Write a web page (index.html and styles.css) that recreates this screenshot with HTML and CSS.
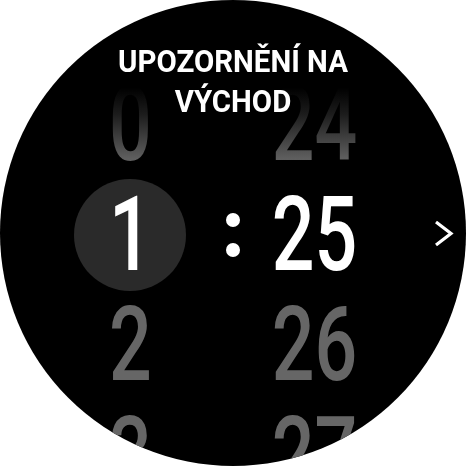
FILE: index.html
```html
<!DOCTYPE html>
<html lang="cs">
<head>
<meta charset="utf-8">
<title>Upozornění na východ</title>
<link rel="stylesheet" href="styles.css">
</head>
<body>
<div class="watch">
  <div class="picker">
    <div class="col hours">
      <div class="cell"><span class="num fade">0</span></div>
      <div class="cell sel"><span class="num">1</span></div>
      <div class="cell"><span class="num dim">2</span></div>
      <div class="cell"><span class="num dim">3</span></div>
    </div>
    <div class="col sep">
      <div class="cell"></div>
      <div class="cell colon"><i class="dot"></i><i class="dot"></i></div>
    </div>
    <div class="col mins">
      <div class="cell"><span class="num fade">24</span></div>
      <div class="cell"><span class="num">25</span></div>
      <div class="cell"><span class="num dim">26</span></div>
      <div class="cell"><span class="num dim">27</span></div>
    </div>
  </div>
  <h1 class="title">UPOZORNĚNÍ NA<br>VÝCHOD</h1>
  <svg class="chev" width="20" height="28" viewBox="0 0 20 28"><polyline points="2,2 17,13.5 2,25" fill="none" stroke="#fff" stroke-width="3.2" stroke-linejoin="miter" stroke-linecap="butt"/></svg>
</div>
</body>
</html>
```
FILE: styles.css
```css
html, body {
  margin: 0;
  padding: 0;
  background: #fff;
}
.watch {
  position: relative;
  width: 466px;
  height: 466px;
  border-radius: 50%;
  background: #000;
  overflow: hidden;
  font-family: Roboto, "Liberation Sans", sans-serif;
  color: #fff;
}
.picker {
  display: grid;
  grid-template-columns: 114px 92px 72px;
  margin-left: 73px;
  padding-top: 70px;
}
.col {
  display: flex;
  flex-direction: column;
  align-items: center;
}
.cell {
  height: 110px;
  width: 100%;
  display: flex;
  align-items: center;
  justify-content: center;
  font-size: 103px;
  line-height: 110px;
  white-space: nowrap;
}
.num {
  display: inline-block;
  transform: scaleX(0.73);
  font-weight: 500;
}
.dim {
  color: #666;
}
.fade {
  color: transparent;
  background: linear-gradient(to bottom, #000 16%, #1c1c1c 40%, #5e5e5e 80%, #666 100%);
  -webkit-background-clip: text;
  background-clip: text;
}
.sel {
  width: 112px;
  height: 112px;
  margin: -1px 0;
  border-radius: 50%;
  background: #2a2a2a;
}
.colon {
  flex-direction: column;
  gap: 16px;
}
.dot {
  display: block;
  width: 14px;
  height: 14px;
  border-radius: 50%;
  background: #fff;
}
.title {
  position: absolute;
  top: 41px;
  left: 0;
  right: 0;
  margin: 0;
  text-align: center;
  font-size: 32px;
  line-height: 40px;
  font-weight: 700;
  transform: scaleX(0.92);
}
.chev {
  position: absolute;
  left: 434px;
  top: 220px;
}
```
